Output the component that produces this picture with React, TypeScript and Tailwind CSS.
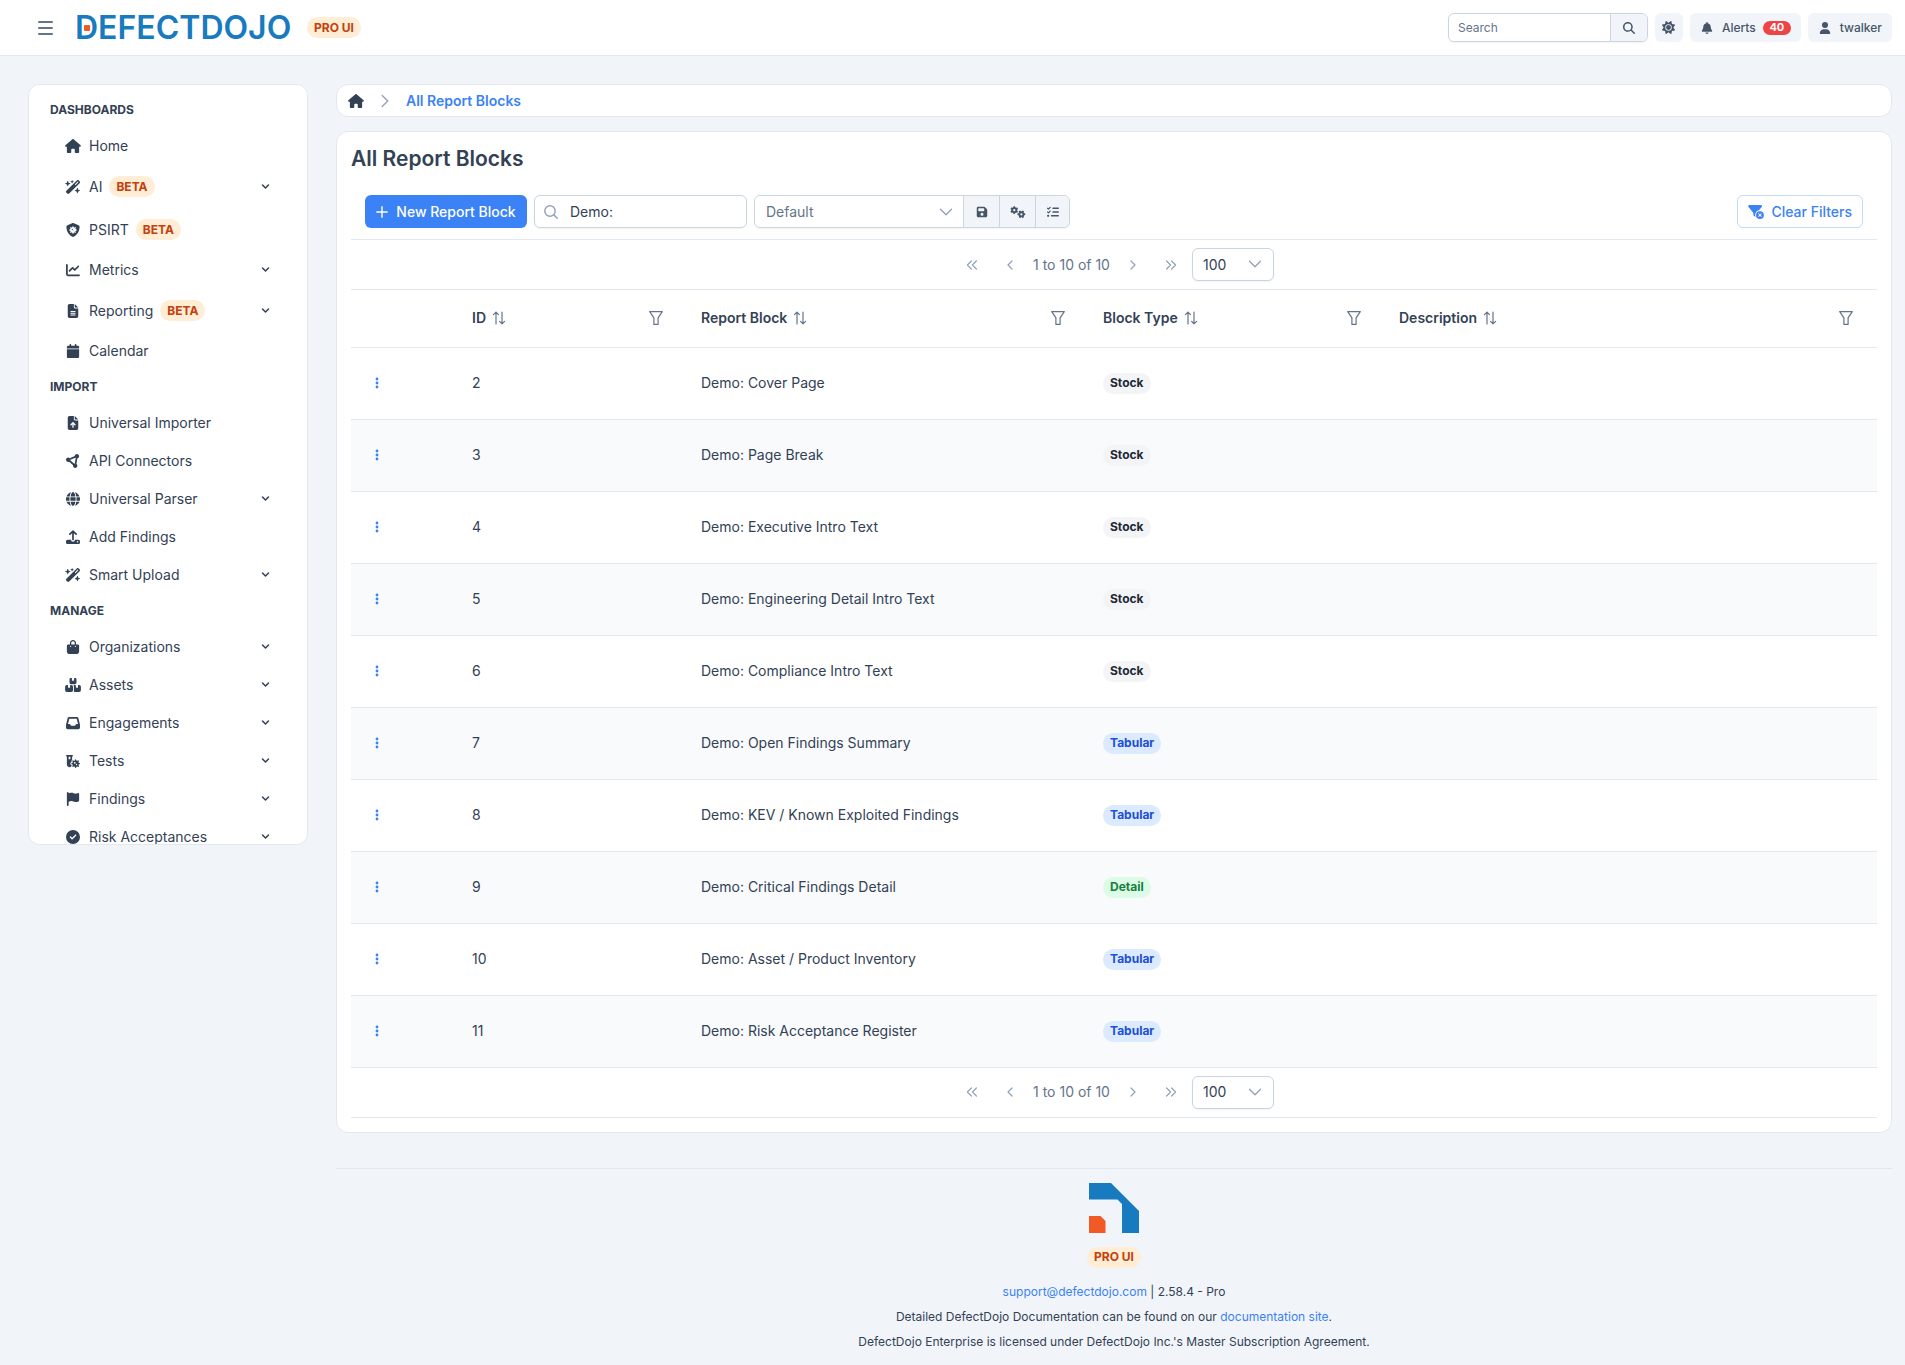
import { useState, type ReactNode } from "react";
import clsx from "clsx";
import {
    FaBagShopping,
    FaBell,
    FaBoxesStacked,
    FaCalendar,
    FaChartLine,
    FaCircleCheck,
    FaCircleNodes,
    FaFileArrowUp,
    FaFileLines,
    FaFilterCircleXmark,
    FaFlag,
    FaFloppyDisk,
    FaGears,
    FaGlobe,
    FaHouse,
    FaInbox,
    FaListCheck,
    FaMagnifyingGlass,
    FaShieldVirus,
    FaSun,
    FaUser,
    FaVialVirus,
    FaWandMagicSparkles
} from "react-icons/fa6";

type NavItem = {
    label: string;
    icon: (props: { className?: string }) => ReactNode;
    beta?: boolean;
    menu?: boolean;
};

function UploadIcon({ className }: { className?: string }) {
    return (
        <svg viewBox="0 0 16 14" className={className} aria-hidden="true">
            <path
                d="M8 9.500V1.200M4.900 4.200 8 1.100l3.100 3.100"
                fill="none"
                stroke="currentColor"
                strokeWidth="1.7"
                strokeLinecap="round"
                strokeLinejoin="round"
            />
            <path
                d="M2.500 9.700H6a2 2 0 0 0 4 0h3.500a1.500 1.500 0 0 1 1.500 1.500v1.200a1.500 1.500 0 0 1-1.500 1.500h-11A1.500 1.500 0 0 1 1 12.400v-1.200a1.500 1.500 0 0 1 1.500-1.500Z"
                fill="currentColor"
            />
            <circle cx="12.600" cy="11.800" r=".8" fill="white" />
        </svg>
    );
}

const NAV: { title: string; items: NavItem[] }[] = [
    {
        title: "DASHBOARDS",
        items: [
            { label: "Home", icon: FaHouse },
            { label: "AI", icon: FaWandMagicSparkles, beta: true, menu: true },
            { label: "PSIRT", icon: FaShieldVirus, beta: true },
            { label: "Metrics", icon: FaChartLine, menu: true },
            { label: "Reporting", icon: FaFileLines, beta: true, menu: true },
            { label: "Calendar", icon: FaCalendar }
        ]
    },
    {
        title: "IMPORT",
        items: [
            { label: "Universal Importer", icon: FaFileArrowUp },
            { label: "API Connectors", icon: FaCircleNodes },
            { label: "Universal Parser", icon: FaGlobe, menu: true },
            { label: "Add Findings", icon: UploadIcon },
            { label: "Smart Upload", icon: FaWandMagicSparkles, menu: true }
        ]
    },
    {
        title: "MANAGE",
        items: [
            { label: "Organizations", icon: FaBagShopping, menu: true },
            { label: "Assets", icon: FaBoxesStacked, menu: true },
            { label: "Engagements", icon: FaInbox, menu: true },
            { label: "Tests", icon: FaVialVirus, menu: true },
            { label: "Findings", icon: FaFlag, menu: true },
            { label: "Risk Acceptances", icon: FaCircleCheck, menu: true }
        ]
    }
];

const COLUMNS = ["ID", "Report Block", "Block Type", "Description"];

const BLOCKS = [
    { id: 2, name: "Demo: Cover Page", type: "Stock" },
    { id: 3, name: "Demo: Page Break", type: "Stock" },
    { id: 4, name: "Demo: Executive Intro Text", type: "Stock" },
    { id: 5, name: "Demo: Engineering Detail Intro Text", type: "Stock" },
    { id: 6, name: "Demo: Compliance Intro Text", type: "Stock" },
    { id: 7, name: "Demo: Open Findings Summary", type: "Tabular" },
    { id: 8, name: "Demo: KEV / Known Exploited Findings", type: "Tabular" },
    { id: 9, name: "Demo: Critical Findings Detail", type: "Detail" },
    { id: 10, name: "Demo: Asset / Product Inventory", type: "Tabular" },
    { id: 11, name: "Demo: Risk Acceptance Register", type: "Tabular" }
];

const TAG_STYLES: Record<string, string> = {
    Stock: "bg-[#f3f4f6] text-[#1f2937]",
    Tabular: "bg-[#dbeafe] text-[#1d4ed8]",
    Detail: "bg-[#dcfce7] text-[#15803d]",
    Beta: "bg-[#ffedd5] text-[#c2410c]"
};

function Tag({ kind, children }: { kind: string; children: ReactNode }) {
    return (
        <span
            className={clsx(
                "inline-flex h-[21px] items-center whitespace-nowrap rounded-full px-[7px] text-xs font-bold",
                TAG_STYLES[kind]
            )}
        >
            {children}
        </span>
    );
}

function Chevron({ className }: { className?: string }) {
    return (
        <svg viewBox="0 0 14 14" fill="none" stroke="currentColor" className={className} aria-hidden="true">
            <path d="M1.5 4.2 7 9.8l5.5-5.6" strokeWidth="1.3" strokeLinecap="round" strokeLinejoin="round" />
        </svg>
    );
}

function SortIcon() {
    return (
        <svg
            viewBox="0 0 14 14"
            fill="none"
            stroke="currentColor"
            strokeWidth="1.2"
            strokeLinecap="round"
            strokeLinejoin="round"
            className="size-[14px]"
            aria-hidden="true"
        >
            <path d="M4 13V1.2M1.4 3.6 4 1.1l2.4 2.5M10 1v11.8M7.6 10.4 10 12.9l2.6-2.5" />
        </svg>
    );
}

function FilterIcon() {
    return (
        <svg viewBox="0 0 14 14" fill="none" stroke="currentColor" className="size-[14px]" aria-hidden="true">
            <path
                d="M.7.6h12.6L9.1 6.9v6.5H4.9V6.9L.7.6Z"
                strokeWidth="1.2"
                strokeLinecap="round"
                strokeLinejoin="round"
            />
        </svg>
    );
}

function PageArrow({ label, d }: { label: string; d: string }) {
    return (
        <button
            type="button"
            aria-label={label}
            disabled
            className="flex h-[35px] w-[35px] items-center justify-center text-slate-400"
        >
            <svg viewBox="0 0 14 14" fill="none" stroke="currentColor" className="size-[14px]" aria-hidden="true">
                <path d={d} strokeWidth="1.2" strokeLinecap="round" strokeLinejoin="round" />
            </svg>
        </button>
    );
}

function Paginator() {
    return (
        <div className="flex h-[50px] items-center justify-center gap-[3px] border-b border-slate-200 text-[#64748b]">
            <PageArrow label="First page" d="M6.4 3 2.4 7l4 4M11.4 3l-4 4 4 4" />
            <PageArrow label="Previous page" d="M9 3 5 7l4 4" />
            <span className="px-[3px]">1 to 10 of 10</span>
            <PageArrow label="Next page" d="m5 3 4 4-4 4" />
            <PageArrow label="Last page" d="m2.6 3 4 4-4 4M7.6 3l4 4-4 4" />
            <div className="relative">
                <select
                    aria-label="Rows per page"
                    defaultValue="100"
                    className="h-[33px] w-[82px] appearance-none rounded-md border border-slate-300 bg-white pl-[10px] text-[#334155] shadow-xs"
                >
                    <option>25</option>
                    <option>50</option>
                    <option>100</option>
                </select>
                <Chevron className="pointer-events-none absolute top-[9px] right-3 size-[14px] text-slate-400" />
            </div>
        </div>
    );
}

function Header() {
    return (
        <header className="flex h-14 items-center border-b border-slate-200 bg-white pr-[13px] pl-[38px]">
            <button type="button" aria-label="Toggle menu" className="text-[#64748b]">
                <svg viewBox="0 0 15 14" className="h-[14px] w-[15px]" aria-hidden="true">
                    <path
                        d="M1 1h13M1 7h13M1 13h13"
                        stroke="currentColor"
                        strokeWidth="2"
                        strokeLinecap="round"
                    />
                </svg>
            </button>
            <a
                href="#"
                className="relative ml-[22px] w-[218px] text-[32px] leading-none font-semibold text-[#187abf]"
            >
                DEFECTDOJO
                <span className="absolute top-[13px] left-[9px] size-[6px] rounded-[1px] bg-[#f15a24]" />
            </a>
            <span className="ml-[14px] flex">
                <Tag kind="Beta">PRO UI</Tag>
            </span>

            <div className="ml-auto flex items-center gap-[7px] text-xs text-[#475569]">
                <form className="flex h-[29px] w-[200px] rounded-md border border-slate-300 shadow-xs">
                    <input
                        type="search"
                        aria-label="Search"
                        placeholder="Search"
                        className="min-w-0 flex-1 rounded-l-md bg-white px-[9px] outline-none placeholder:text-[#64748b]"
                    />
                    <button
                        type="submit"
                        aria-label="Run search"
                        className="flex w-[37px] items-center justify-center rounded-r-md border-l border-slate-300 bg-slate-100"
                    >
                        <FaMagnifyingGlass className="size-3" />
                    </button>
                </form>
                <button
                    type="button"
                    aria-label="Theme"
                    className="flex h-[29px] w-7 items-center justify-center rounded-md bg-slate-100"
                >
                    <FaSun className="size-[13px]" />
                </button>
                <button
                    type="button"
                    className="flex h-[29px] items-center rounded-md bg-slate-100 px-[10px] font-medium"
                >
                    <FaBell className="mr-2 h-3 w-[14px]" />
                    Alerts
                    <span className="ml-[7px] flex h-[14px] w-7 items-center justify-center rounded-full bg-[#ef4444] text-[11px] font-bold text-white">
                        40
                    </span>
                </button>
                <button
                    type="button"
                    className="flex h-[29px] items-center rounded-md bg-slate-100 px-[10px] font-medium"
                >
                    <FaUser className="mr-2 h-3 w-[14px]" />
                    twalker
                </button>
            </div>
        </header>
    );
}

function Sidebar() {
    return (
        <nav className="max-h-[761px] w-[280px] shrink-0 overflow-y-auto rounded-xl border border-slate-200 bg-white pt-2 [scrollbar-width:none]">
            {NAV.map((group) => (
                <section key={group.title}>
                    <h2 className="flex h-[34px] items-center px-[21px] text-xs font-bold">{group.title}</h2>
                    <ul>
                        {group.items.map(({ label, icon: Icon, beta, menu }) => (
                            <li key={label}>
                                <a
                                    href="#"
                                    className={clsx(
                                        "flex items-center pr-[37px] pl-9",
                                        beta ? "h-[43px]" : "h-[38px]"
                                    )}
                                >
                                    <Icon className="mr-2 h-[14px] w-4 shrink-0" />
                                    <span className="mr-[7px]">{label}</span>
                                    {beta ? <Tag kind="Beta">BETA</Tag> : null}
                                    {menu ? (
                                        <svg
                                            viewBox="0 0 9 8"
                                            fill="none"
                                            stroke="currentColor"
                                            className="ml-auto h-2 w-[9px]"
                                            aria-hidden="true"
                                        >
                                            <path
                                                d="m1.5 2 3 3 3-3"
                                                strokeWidth="1.5"
                                                strokeLinecap="round"
                                                strokeLinejoin="round"
                                            />
                                        </svg>
                                    ) : null}
                                </a>
                            </li>
                        ))}
                    </ul>
                </section>
            ))}
        </nav>
    );
}

function Toolbar() {
    const [query, setQuery] = useState("Demo:");

    return (
        <div className="flex items-center border-b border-slate-200 px-[14px] pb-[11px]">
            <button
                type="button"
                className="flex h-[33px] w-[162px] items-center justify-center gap-2 rounded-md bg-[#3b82f6] font-medium text-white"
            >
                <svg viewBox="0 0 12 12" className="size-3" aria-hidden="true">
                    <path d="M6 .8v10.4M.8 6h10.4" stroke="currentColor" strokeWidth="1.4" strokeLinecap="round" />
                </svg>
                New Report Block
            </button>

            <div className="relative ml-[7px]">
                <svg
                    viewBox="0 0 14 14"
                    fill="none"
                    stroke="currentColor"
                    className="absolute top-[10px] left-[10px] size-[14px] text-slate-400"
                    aria-hidden="true"
                >
                    <circle cx="6" cy="6" r="5.2" strokeWidth="1.4" />
                    <path d="m9.9 9.9 3.4 3.4" strokeWidth="1.4" strokeLinecap="round" />
                </svg>
                <input
                    type="text"
                    aria-label="Filter report blocks"
                    value={query}
                    onChange={(e) => setQuery(e.target.value)}
                    className="h-[33px] w-[213px] rounded-md border border-slate-300 bg-white pr-2 pl-[35px] shadow-xs outline-none"
                />
            </div>

            <div className="ml-[7px] flex h-[33px] rounded-md border border-slate-300 text-[#475569] shadow-xs">
                <div className="relative">
                    <select
                        aria-label="Saved view"
                        className="h-full w-[208px] appearance-none rounded-l-md bg-white pl-[11px] text-[#64748b]"
                    >
                        <option>Default</option>
                    </select>
                    <Chevron className="pointer-events-none absolute top-[9px] right-[10px] size-[14px] text-slate-400" />
                </div>
                <button
                    type="button"
                    aria-label="Save view"
                    className="flex w-9 items-center justify-center border-l border-slate-300 bg-slate-100"
                >
                    <FaFloppyDisk className="size-3" />
                </button>
                <button
                    type="button"
                    aria-label="View settings"
                    className="flex w-9 items-center justify-center border-l border-slate-300 bg-slate-100"
                >
                    <FaGears className="h-3 w-4" />
                </button>
                <button
                    type="button"
                    aria-label="Choose columns"
                    className="flex w-[34px] items-center justify-center rounded-r-md border-l border-slate-300 bg-slate-100"
                >
                    <FaListCheck className="size-3" />
                </button>
            </div>

            <button
                type="button"
                className="ml-auto flex h-[33px] items-center gap-[7px] rounded-md border border-[#bfdbfe] px-[10px] font-medium text-[#3b82f6]"
            >
                <FaFilterCircleXmark className="h-[14px] w-4" />
                Clear Filters
            </button>
        </div>
    );
}

function BlocksTable() {
    return (
        <table className="w-full table-fixed text-left">
            <colgroup>
                <col className="w-[107px]" />
                <col className="w-[229px]" />
                <col className="w-[402px]" />
                <col className="w-[296px]" />
                <col />
            </colgroup>
            <thead>
                <tr className="h-[57px] border-b border-slate-200">
                    <th aria-label="Actions" />
                    {COLUMNS.map((name) => (
                        <th key={name} className="px-[14px] font-semibold">
                            <div className="flex items-center text-[#64748b]">
                                <span className="mr-[6px] text-[#334155]">{name}</span>
                                <button type="button" aria-label={`Sort by ${name}`}>
                                    <SortIcon />
                                </button>
                                <button
                                    type="button"
                                    aria-label={`Filter by ${name}`}
                                    className="mr-[10px] ml-auto"
                                >
                                    <FilterIcon />
                                </button>
                            </div>
                        </th>
                    ))}
                </tr>
            </thead>
            <tbody>
                {BLOCKS.map((block) => (
                    <tr key={block.id} className="h-[72px] border-b border-slate-200 even:bg-slate-50">
                        <td className="px-[14px]">
                            <button
                                type="button"
                                aria-label={`Actions for ${block.name}`}
                                className="flex h-6 w-6 items-center justify-center text-[#3b82f6]"
                            >
                                <svg viewBox="0 0 4 12" fill="currentColor" className="h-3 w-1" aria-hidden="true">
                                    <circle cx="2" cy="2" r="1.4" />
                                    <circle cx="2" cy="6" r="1.4" />
                                    <circle cx="2" cy="10" r="1.4" />
                                </svg>
                            </button>
                        </td>
                        <td className="px-[14px]">{block.id}</td>
                        <td className="px-[14px]">{block.name}</td>
                        <td className="px-[14px]">
                            <span className="flex">
                                <Tag kind={block.type}>{block.type}</Tag>
                            </span>
                        </td>
                        <td />
                    </tr>
                ))}
            </tbody>
        </table>
    );
}

function Footer() {
    return (
        <footer className="mt-[35px] flex flex-col items-center border-t border-slate-200 pt-[14px] text-xs">
            <svg viewBox="0 0 50 50" className="size-[50px]" aria-hidden="true">
                <path d="M0 0h22l28 28v22H33V21l-4.500-4.500H0Z" fill="#187abf" />
                <path d="M0 33h11.500l5 5v12H0Z" fill="#f15a24" />
            </svg>
            <span className="mt-[14px] flex">
                <Tag kind="Beta">PRO UI</Tag>
            </span>
            <p className="mt-[11px] leading-[25px]">
                <a href="#" className="text-[#3b82f6]">
                    support@defectdojo.com
                </a>{" "}
                | 2.58.4 - Pro
            </p>
            <p className="leading-[25px]">
                Detailed DefectDojo Documentation can be found on our{" "}
                <a href="#" className="text-[#3b82f6]">
                    documentation site
                </a>
                .
            </p>
            <p className="leading-[25px]">
                DefectDojo Enterprise is licensed under DefectDojo Inc.'s Master Subscription Agreement.
            </p>
        </footer>
    );
}

export default function App() {
    return (
        <div className="min-h-screen bg-slate-100 font-[Inter,sans-serif] text-sm text-[#334155]">
            <Header />
            <div className="flex items-start gap-7 pt-7 pr-[13px] pl-7">
                <Sidebar />
                <main className="min-w-0 flex-1">
                    <div className="flex h-[33px] items-center rounded-xl border border-slate-200 bg-white px-[11px] font-semibold">
                        <a href="#" aria-label="Home">
                            <FaHouse className="h-[14px] w-4" />
                        </a>
                        <svg
                            viewBox="0 0 14 14"
                            fill="none"
                            stroke="currentColor"
                            className="mx-[14px] size-[14px] text-slate-400"
                            aria-hidden="true"
                        >
                            <path d="m4.200 1.500 5.600 5.500-5.600 5.500" strokeWidth="1.3" strokeLinecap="round" />
                        </svg>
                        <a href="#" className="text-[#3b82f6]">
                            All Report Blocks
                        </a>
                    </div>

                    <section className="mt-[14px] rounded-xl border border-slate-200 bg-white px-[14px] pt-[13px] pb-[14px]">
                        <h1 className="mb-[22px] text-[21px] leading-7 font-semibold">All Report Blocks</h1>
                        <Toolbar />
                        <Paginator />
                        <BlocksTable />
                        <Paginator />
                    </section>

                    <Footer />
                </main>
            </div>
        </div>
    );
}
